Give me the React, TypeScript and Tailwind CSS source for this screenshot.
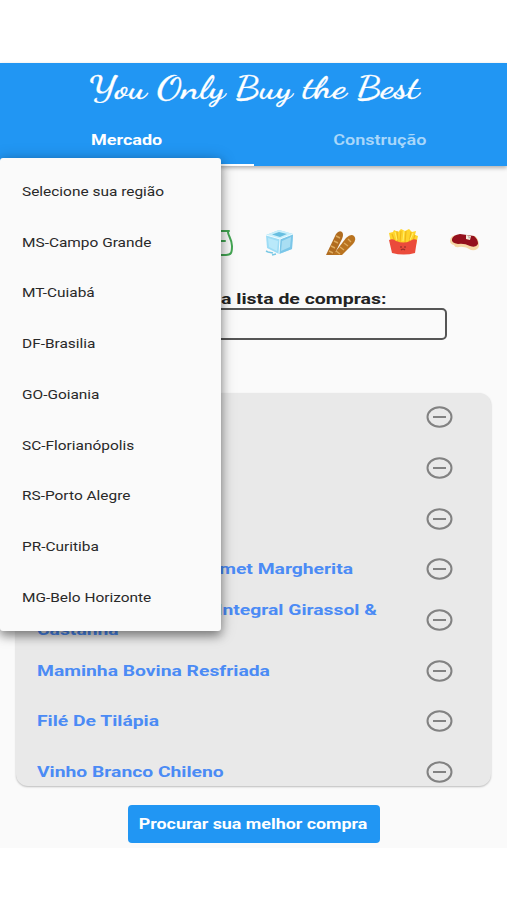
const regions = [
  "Selecione sua região",
  "MS-Campo Grande",
  "MT-Cuiabá",
  "DF-Brasilia",
  "GO-Goiania",
  "SC-Florianópolis",
  "RS-Porto Alegre",
  "PR-Curitiba",
  "MG-Belo Horizonte",
];

const products = [
  ["Leite Integral"],
  ["Arroz Branco"],
  ["Café Torrado"],
  ["Pizza Resfriada Gourmet Margherita"],
  ["Pão De Forma Milho Integral Girassol &", "Castanha"],
  ["Maminha Bovina Resfriada"],
  ["Filé De Tilápia"],
  ["Vinho Branco Chileno"],
];

function JarIcon() {
  return (
    <svg className="h-8 w-8" viewBox="0 0 32 32" fill="none" stroke="#43a653" strokeWidth="2" strokeLinecap="round">
      <path d="M6 4H27M26 5C26 9 30 12 30 19C30 26 29 28 24 28H9C4 28 3 26 3 20C3 13 7 11 7 6M8 14H23" />
    </svg>
  );
}

function IceIcon() {
  return (
    <svg className="h-8 w-8" viewBox="0 0 32 32">
      <path d="M2 8L15 3L29 7L28 22L15 27L3 21Z" fill="#9ddcf5" />
      <path d="M2 8L15 3L29 7L16 12Z" fill="#c9effb" />
      <path d="M8 7.500L15 5L23 7L16 10Z" fill="#67bee0" />
      <path d="M16 12L29 7L28 22L15 27Z" fill="#7bc6e8" />
      <path d="M18 14L27 10L26 20L17 24Z" fill="#a9def3" />
      <path d="M4 11L14 14L13 24L5 20Z" fill="#b9e9fa" />
      <path d="M2 8L16 12L29 7M16 12L15 27" fill="none" stroke="#effcff" strokeWidth="1" />
      <path d="M4 25L9 26M8 28L12 27M2 24L4 25" stroke="#78c8e5" strokeWidth="1.500" />
    </svg>
  );
}

function BreadIcon() {
  return (
    <svg className="h-8 w-8" viewBox="0 0 32 32">
      <path d="M0 28L10 7Q13 3 16 5Q18 7 16 12L8 28Z" fill="#b06c20" />
      <path d="M7 28L20 11Q25 6 28 9Q31 12 27 17L16 28Z" fill="#b9731f" />
      <path d="M10 9L14 11M8 14L12 16M5 19L9 21M3 24L7 26M22 12L25 15M18 16L22 19M14 20L18 23M10 24L14 27" stroke="#deaa5c" strokeWidth="1.400" />
    </svg>
  );
}

function FriesIcon() {
  return (
    <svg className="h-8 w-8" viewBox="0 0 32 32">
      <path d="M3 16L1 6L5 5L6 3L10 5L13 2L17 4L21 2L24 5L28 4L27 8L30 9L28 18Z" fill="#ffd42b" />
      <path d="M4 7L7 15M9 4L10 16M13 4L12 15M18 4L17 16M23 5L21 16M27 8L24 16" stroke="#eeb81b" strokeWidth="1.200" />
      <path d="M7 5L9 13M16 4L15 14M25 6L22 13" stroke="#fff06b" />
      <path d="M1 13Q5 11 8 14Q16 17 22 14Q26 11 29 13L27 26Q16 29 4 26Z" fill="#eb4b3b" />
      <path d="M13 19V21M17 19V21M13 23Q15 21 17 23" fill="none" stroke="#9c302a" strokeWidth="1.200" />
    </svg>
  );
}

function SteakIcon() {
  return (
    <svg className="h-8 w-8" viewBox="0 0 32 32">
      <path d="M0 14Q0 8 8 8L25 9Q29 12 29 19Q28 24 21 23Q15 19 9 20Q5 21 4 18Q0 17 0 14Z" fill="#f6d7a4" />
      <path d="M2 12Q3 8 10 7L24 9Q28 12 28 17Q26 21 20 19Q14 16 8 17Q1 16 2 12Z" fill="#94101c" />
      <path d="M16 8L21 9L20 13L16 12Z" fill="#f7ead9" />
      <path d="M18 9L20 10L19 12Z" fill="#a7a6a0" />
    </svg>
  );
}

const categoryIcons = [JarIcon, IceIcon, BreadIcon, FriesIcon, SteakIcon];

function RemoveIcon() {
  return (
    <svg className="h-[22px] w-[27px] shrink-0" viewBox="0 0 27 22" fill="none" stroke="#828282" strokeWidth="2">
      <ellipse cx="13.500" cy="11" rx="12" ry="9.700" />
      <path d="M7 11H20" />
    </svg>
  );
}

function Header() {
  return (
    <header className="relative z-10 flex h-[103px] flex-col bg-[#2196f3] text-white shadow-[0_2px_4px_rgba(0,0,0,0.3)]">
      <h1 className="flex h-[52px] items-center justify-center pb-[3px] pl-[2px] font-['Dancing_Script','Liberation_Serif',cursive] text-[32px] font-medium [-webkit-text-stroke:0.3px_white]">
        <span className="inline-block scale-x-[1.23] whitespace-nowrap">You Only Buy the Best</span>
      </h1>
      <nav className="grid flex-1 grid-cols-2 text-center text-[15px] font-bold">
        <div className="border-b-2 border-white pt-[14px] leading-[22px]">
          <span className="inline-block scale-x-[1.2]">Mercado</span>
        </div>
        <div className="pt-[14px] leading-[22px] font-semibold text-[#a9d7fa]">
          <span className="inline-block scale-x-[1.2]">Construção</span>
        </div>
      </nav>
    </header>
  );
}

function ProductList() {
  return (
    <ul className="mx-4 mt-[53px] h-[393px] overflow-hidden rounded-[12px] bg-[#e9e9e9] shadow-[0_1px_2px_rgba(0,0,0,0.25)]">
      {products.map((lines) => (
        <li key={lines[0]} className="flex h-[50.7px] -translate-y-px items-center justify-between pr-[38px] pl-[21px]">
          <div className="origin-left scale-x-[1.286] text-[15px] leading-5 font-bold whitespace-nowrap text-[#4b8bf5]">
            {lines.map((line) => (
              <p key={line}>{line}</p>
            ))}
          </div>
          <RemoveIcon />
        </li>
      ))}
    </ul>
  );
}

function RegionMenu() {
  return (
    <ul className="absolute top-[158px] left-0 z-20 h-[473px] w-[221px] rounded-[3px] bg-[#fafafa] pt-[8.5px] shadow-[0_5px_10px_rgba(0,0,0,0.35),0_2px_16px_rgba(0,0,0,0.25)]">
      {regions.map((region) => (
        <li key={region} className="flex h-[50.7px] items-center pl-[21.5px] text-[13px] text-[#292929]">
          <span className="inline-block origin-left scale-x-[1.187] whitespace-nowrap">{region}</span>
        </li>
      ))}
    </ul>
  );
}

export default function App() {
  return (
    <div className="relative h-[900px] w-[507px] overflow-hidden bg-white pt-[63px] font-[Roboto,sans-serif]">
      <Header />
      <main className="flex h-[682px] flex-col bg-[#fafafa]">
        <div className="mt-[61px] ml-[202px] flex h-8 shrink-0 gap-[30px]">
          {categoryIcons.map((Icon, i) => (
            <Icon key={i} />
          ))}
        </div>
        <label className="mt-[30px] h-5 pr-[121px] text-right text-[15px] leading-5 font-bold text-[#222]">
          <span className="inline-block origin-right scale-x-[1.298]">Crie a sua lista de compras:</span>
        </label>
        <input className="mx-[60px] -mt-[1px] h-8 shrink-0 rounded-[5px] border-2 border-[#555]" />
        <ProductList />
        <button className="mx-auto mt-[19px] h-[38px] w-[252px] shrink-0 rounded-[4px] bg-[#2196f3] text-[15px] font-bold text-white">
          <span className="inline-block scale-x-[1.19] whitespace-nowrap">Procurar sua melhor compra</span>
        </button>
      </main>
      <RegionMenu />
    </div>
  );
}
